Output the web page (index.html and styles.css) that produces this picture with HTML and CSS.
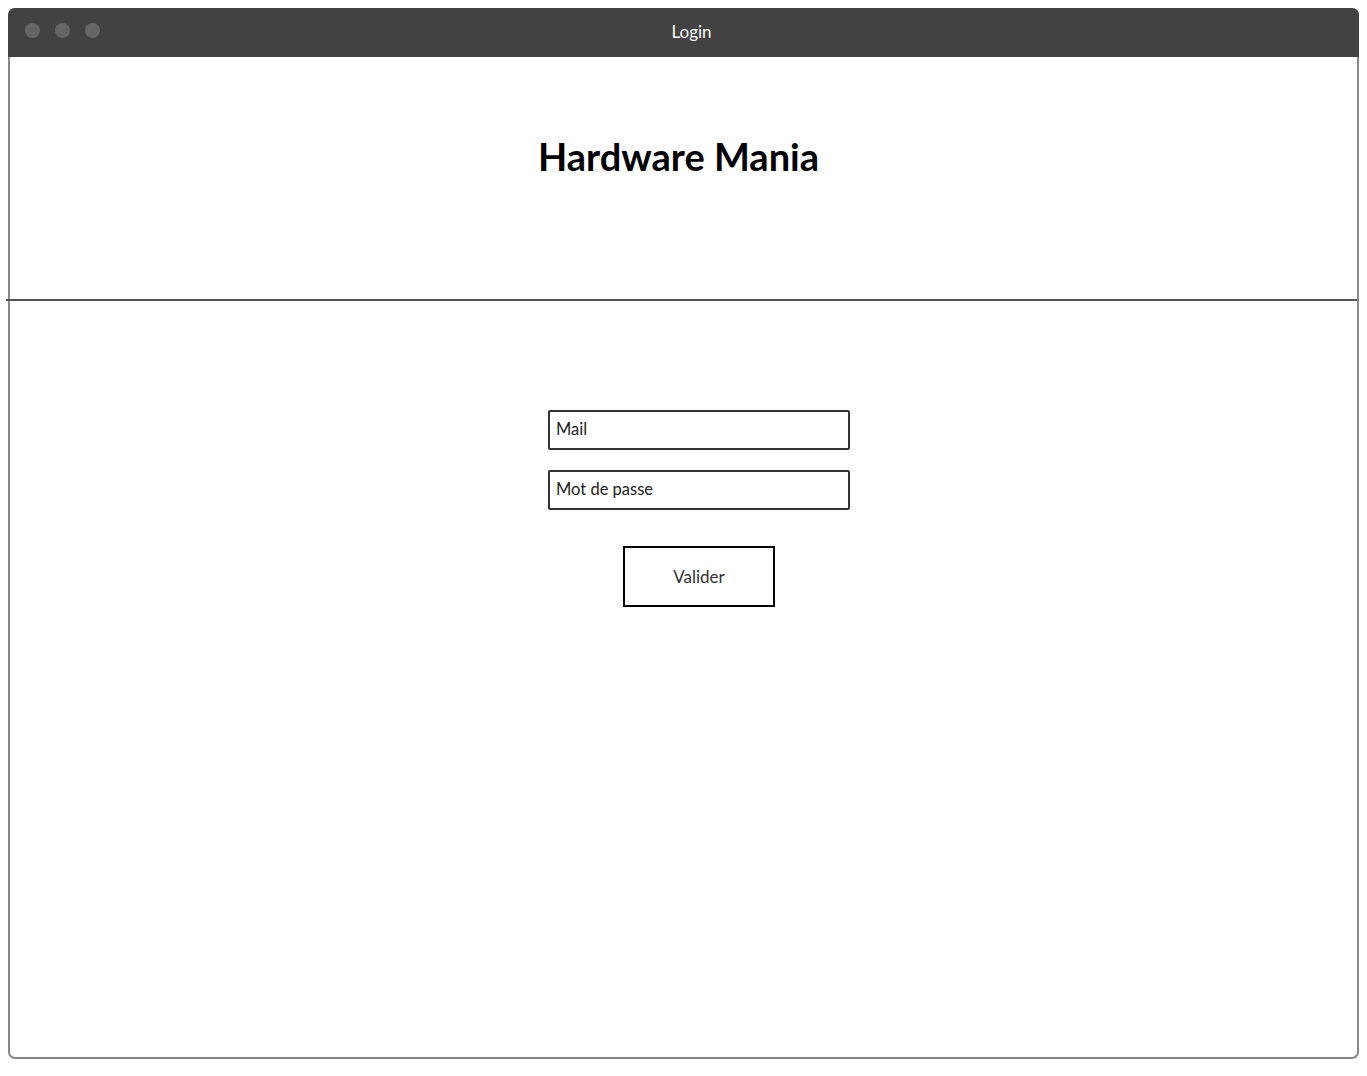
FILE: index.html
```html
<!DOCTYPE html>
<html lang="fr">
<head>
  <meta charset="UTF-8" />
  <meta name="viewport" content="width=device-width, initial-scale=1" />
  <title>Login</title>
  <link rel="stylesheet" href="styles.css">
</head>
<body>
  <div class="window">
    <div class="titlebar">
      <div class="dots">
        <span class="dot"></span>
        <span class="dot"></span>
        <span class="dot"></span>
      </div>
      <div class="title">Login</div>
    </div>
    <div class="header">
      <h1>Hardware Mania</h1>
    </div>
    <div class="divider"></div>
    <form class="login-form" autocomplete="off">
      <input type="text" class="field" placeholder="Mail" />
      <input type="password" class="field" placeholder="Mot de passe" />
      <button type="submit">Valider</button>
    </form>
  </div>
</body>
</html>
```

FILE: styles.css
```css
body {
  margin: 0;
  padding: 8px 0 0 8px;
  font-family: Lato, "Open Sans", sans-serif;
  background: #fff;
}
.window {
  width: 1351px;
  height: 1051px;
  box-sizing: border-box;
  border: 2px solid #888;
  border-top: none;
  border-radius: 7px;
  display: flex;
  flex-direction: column;
}
.titlebar {
  height: 49px;
  background: #424242;
  border-radius: 7px 7px 0 0;
  margin: 0 -2px;
  display: flex;
  align-items: center;
  position: relative;
}
.dots {
  display: flex;
  gap: 15px;
  padding-left: 17px;
  margin-top: -4px;
}
.dot {
  width: 15px;
  height: 15px;
  border-radius: 50%;
  background: #666;
}
.title {
  position: absolute;
  left: 0;
  right: 0;
  top: 0;
  bottom: 0;
  display: flex;
  align-items: center;
  justify-content: center;
  padding-left: 16px;
  padding-bottom: 3px;
  color: #fff;
  font-size: 17px;
}
.header {
  height: 242px;
  display: flex;
  justify-content: center;
  padding-right: 10px;
}
h1 {
  margin: 75px 0 0;
  font-size: 38px;
  font-weight: 700;
  color: #000;
  line-height: 48px;
}
.divider {
  height: 2px;
  background: #555;
  margin-left: -4px;
}
.login-form {
  display: flex;
  flex-direction: column;
  align-items: center;
  padding: 109px 0 0 31px;
}
.field {
  width: 302px;
  height: 40px;
  box-sizing: border-box;
  border: 2px solid #333;
  border-radius: 2px;
  padding: 0 6px 2px;
  font-family: inherit;
  font-size: 16.5px;
  color: #222;
  margin-bottom: 20px;
}
.field::placeholder {
  color: #222;
}
button {
  margin-top: 16px;
  width: 152px;
  height: 61px;
  border: 2px solid #000;
  background: #fff;
  font-family: inherit;
  font-size: 17px;
  color: #333;
  cursor: pointer;
}
```
